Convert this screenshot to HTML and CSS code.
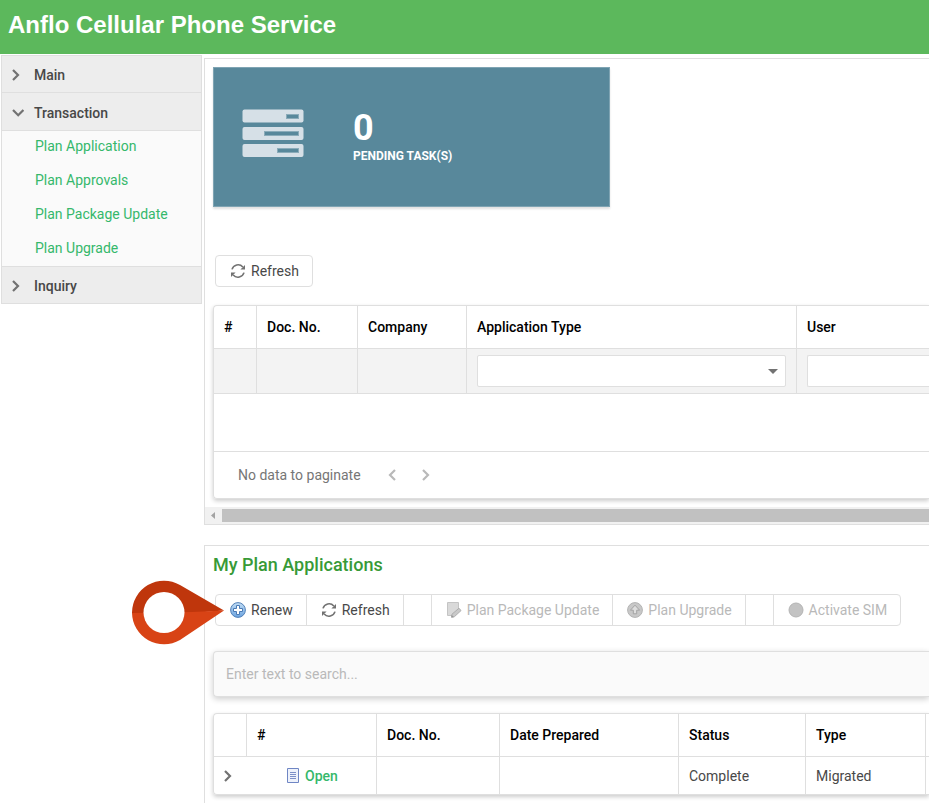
FILE: index.html
```html
<!DOCTYPE html>
<html lang="en">
  <head>
    <meta charset="UTF-8">
    <title>Anflo Cellular Phone Service</title>
    <link rel="stylesheet" href="styles.css">
  </head>
  <body>
    <!-- shared icons -->
    <svg class="sprite" aria-hidden="true">
      <symbol id="chevron" viewBox="0 0 16 16">
        <path d="M5 3l5 5-5 5" fill="none" stroke="currentColor" stroke-width="2.2"/>
      </symbol>
      <symbol id="chevron-down" viewBox="0 0 16 16">
        <path d="M5 5l5.200 5.200L15.400 5" fill="none" stroke="currentColor" stroke-width="2.2"/>
      </symbol>
      <symbol id="refresh" viewBox="0 0 16 16">
        <path d="M2 6.400A6.300 6.300 0 0 1 12.800 4M14 9.600A6.300 6.300 0 0 1 3.200 12" fill="none" stroke="currentColor" stroke-width="1.6"/>
        <path d="M15 2v4.600h-4.600zM1 14V9.400h4.600z" fill="currentColor"/>
      </symbol>
    </svg>

    <header class="header">
      <h1>Anflo Cellular Phone Service</h1>
    </header>

    <div class="layout">
      <nav class="sidebar">
        <button type="button" class="group"><svg class="icon"><use href="#chevron"/></svg>Main</button>
        <button type="button" class="group open"><svg class="icon"><use href="#chevron-down"/></svg>Transaction</button>
        <ul class="links">
          <li><a href="#">Plan Application</a></li>
          <li><a href="#">Plan Approvals</a></li>
          <li><a href="#">Plan Package Update</a></li>
          <li><a href="#">Plan Upgrade</a></li>
        </ul>
        <button type="button" class="group"><svg class="icon"><use href="#chevron"/></svg>Inquiry</button>
      </nav>

      <main class="content">
        <section class="panel tasks">
          <div class="card">
            <svg class="card-icon" viewBox="0 0 62 48">
              <g fill="#d6e0e7">
                <rect x=".5" y=".5" width="61" height="13" rx="2"/>
                <rect x=".5" y="18" width="61" height="13" rx="2"/>
                <rect x=".5" y="35" width="61" height="13" rx="2"/>
              </g>
              <g fill="#58889b" stroke="#8aabb9">
                <rect x="44.500" y="5.500" width="12" height="4"/>
                <rect x="22.500" y="22.500" width="34" height="4"/>
                <rect x="35.500" y="39.500" width="21" height="4"/>
              </g>
            </svg>
            <div class="card-text">
              <div class="count">0</div>
              <div class="count-label">PENDING TASK(S)</div>
            </div>
          </div>

          <div class="toolbar">
            <button type="button"><svg class="icon"><use href="#refresh"/></svg>Refresh</button>
          </div>

          <div class="grid">
            <table>
              <colgroup>
                <col class="w43"><col class="w101"><col class="w109"><col class="w330"><col>
              </colgroup>
              <thead>
                <tr><th>#</th><th>Doc. No.</th><th>Company</th><th>Application Type</th><th>User</th></tr>
                <tr class="filter">
                  <td></td>
                  <td></td>
                  <td></td>
                  <td><div class="select"><select aria-label="Application Type"><option></option></select></div></td>
                  <td><input type="text" aria-label="User"></td>
                </tr>
              </thead>
              <tbody>
                <tr class="empty"><td colspan="5"></td></tr>
              </tbody>
            </table>
            <div class="pager">
              <span>No data to paginate</span>
              <button type="button" class="prev" aria-label="Previous" disabled><svg class="icon"><use href="#chevron"/></svg></button>
              <button type="button" aria-label="Next" disabled><svg class="icon"><use href="#chevron"/></svg></button>
            </div>
          </div>

          <div class="scrollbar">
            <svg viewBox="0 0 17 17"><path d="M10 5v7L6 8.500z" fill="#a3a3a3"/></svg>
            <div class="thumb"></div>
          </div>
        </section>

        <section class="panel plans">
          <h2>My Plan Applications</h2>

          <div class="toolbar">
            <button type="button">
              <svg class="icon" viewBox="0 0 16 16">
                <defs>
                  <linearGradient id="blue" x1="0" y1="0" x2="0" y2="1">
                    <stop offset="0" stop-color="#c3def5"/>
                    <stop offset="1" stop-color="#6ba3df"/>
                  </linearGradient>
                </defs>
                <circle cx="8" cy="8" r="7.400" fill="url(#blue)" stroke="#5482b8"/>
                <path d="M6.500 3.500h3v3h3v3h-3v3h-3v-3h-3v-3h3z" fill="#fff" stroke="#4a7ab5"/>
              </svg>Renew</button>
            <button type="button"><svg class="icon"><use href="#refresh"/></svg>Refresh</button>
            <span class="gap"></span>
            <button type="button" disabled>
              <svg class="icon" viewBox="0 0 16 16">
                <path d="M1.500.500h11v8l-5 5h-6z" fill="#d9d9d9" stroke="#c4c4c4"/>
                <path d="M6 12.200l7-6 2 2.400-6.500 6-3 .600z" fill="#c9c9c9" stroke="#adadad"/>
                <path d="M5.400 15.600l.3-2.600 2.300 2.200z" fill="#999"/>
              </svg>Plan Package Update</button>
            <button type="button" disabled>
              <svg class="icon" viewBox="0 0 16 16">
                <circle cx="8" cy="8" r="7.400" fill="#c8c8c8" stroke="#b3b3b3"/>
                <path d="M8 3.200l4.600 5H9.700v3.600H6.300V8.200H3.400z" fill="#dedede" stroke="#a3a3a3"/>
              </svg>Plan Upgrade</button>
            <span class="gap"></span>
            <button type="button" disabled>
              <svg class="icon" viewBox="0 0 16 16">
                <circle cx="8" cy="8" r="7" fill="#c3c3c3" stroke="#b4b4b4"/>
              </svg>Activate SIM</button>

            <!-- callout pointing at Renew -->
            <svg class="callout" viewBox="0 0 92 65">
              <path d="M0 33A32 32 0 0 1 48 5L92 30.500L60 33z" fill="#bf360c"/>
              <path d="M0 33A32 32 0 0 0 48 60L92 30.500L60 32z" fill="#d84315"/>
              <circle cx="32" cy="32.500" r="20.500" fill="#fff"/>
            </svg>
          </div>

          <input type="search" class="search" placeholder="Enter text to search..." aria-label="Search">

          <div class="grid">
            <table>
              <colgroup>
                <col class="w33"><col class="w130"><col class="w123"><col class="w179"><col class="w127"><col class="w120"><col>
              </colgroup>
              <thead>
                <tr><th></th><th>#</th><th>Doc. No.</th><th>Date Prepared</th><th>Status</th><th>Type</th><th></th></tr>
              </thead>
              <tbody>
                <tr class="row">
                  <td class="expand"><button type="button" aria-label="Expand"><svg class="icon"><use href="#chevron"/></svg></button></td>
                  <td class="action">
                    <a href="#">
                      <svg class="icon" viewBox="0 0 16 16">
                        <path d="M2.500.500h11v14h-11z" fill="#eef2fb" stroke="#6f86c4"/>
                        <path d="M5 4.500h6M5 6.500h6M5 8.500h6M5 10.500h6" stroke="#7d90c8"/>
                      </svg>Open</a>
                  </td>
                  <td></td>
                  <td></td>
                  <td>Complete</td>
                  <td>Migrated</td>
                  <td></td>
                </tr>
              </tbody>
            </table>
          </div>
        </section>
      </main>
    </div>
  </body>
</html>
```
FILE: styles.css
```css
* {
  box-sizing: border-box;
}
body {
  display: flex;
  flex-direction: column;
  min-height: 100vh;
  margin: 0;
  overflow-x: hidden;
  background-color: #fff;
  color: #484848;
  font-family: Roboto, 'Liberation Sans', sans-serif;
  font-size: 14px;
  line-height: 20px;
}
button,
input,
select {
  font: inherit;
  color: inherit;
}
button {
  margin: 0;
  padding: 0;
  border: none;
  background: none;
  cursor: pointer;
}
.sprite {
  position: absolute;
  width: 0;
  height: 0;
}
.icon {
  flex: none;
  width: 16px;
  height: 16px;
  color: #727272;
}
.header {
  height: 54px;
  padding: 11px 8px;
  background-color: #5cb85c;
}
.header h1 {
  margin: 0;
  color: #fff;
  font-family: 'Liberation Sans', Arial, sans-serif;
  font-size: 24px;
  line-height: 28px;
}
.layout {
  display: flex;
  flex: 1;
  align-items: stretch;
}

/* sidebar */
.sidebar {
  flex: none;
  align-self: flex-start;
  width: 201px;
  margin: 1px 2px 0 1px;
  border: 1px solid #dfdfdf;
}
.group {
  display: flex;
  align-items: center;
  gap: 10px;
  width: 100%;
  height: 36px;
  padding: 2px 6px 0;
  background-color: #ededed;
  font-weight: 500;
}
.group.open {
  height: 38px;
  border-top: 1px solid #dfdfdf;
}
.links {
  margin: 0;
  padding: 0;
  border: solid #dfdfdf;
  border-width: 1px 0;
  background-color: #fafafa;
  list-style: none;
}
.links li + li {
  margin-top: 1px;
}
.links a {
  display: block;
  padding: 5px 33px 8px;
  color: #35b86b;
  text-decoration: none;
}

/* panels and grids run up to the right edge of the window */
.content {
  display: flex;
  flex-direction: column;
  flex: 1;
  gap: 20px;
  min-width: 0;
  padding-top: 4px;
}
.panel {
  padding: 8px 0 0 8px;
  border: 1px solid #dfdfdf;
  border-right: none;
}
.plans {
  flex: 1;
  padding-bottom: 8px;
  border-bottom: none;
}
.card {
  display: flex;
  align-items: center;
  gap: 49px;
  width: 397px;
  height: 140px;
  margin-bottom: 48px;
  padding: 0 28px;
  border: 1px solid #7fa4b3;
  background-color: #58889b;
  box-shadow: 0 2px 2px rgba(0, 0, 0, 0.12);
  color: #fff;
  font-weight: bold;
}
.card-icon {
  width: 62px;
  height: 48px;
  margin-bottom: 8px;
}
.card-text {
  padding-top: 2px;
}
.count {
  font-size: 36px;
  line-height: 36px;
}
.count-label {
  font-size: 12px;
}
.toolbar {
  position: relative;
  display: flex;
  width: max-content;
  height: 32px;
  margin-left: 2px;
  border: 1px solid #dfdfdf;
  border-radius: 4px;
}
.toolbar button {
  display: flex;
  align-items: center;
  gap: 5px;
  padding: 0 13px 0 14px;
}
.toolbar > * + button,
.toolbar .gap {
  border-left: 1px solid #dfdfdf;
}
.toolbar .gap {
  width: 28px;
}
.toolbar button:disabled {
  color: #b9b9b9;
  cursor: default;
}
.callout {
  position: absolute;
  top: -15px;
  left: -84px;
  width: 92px;
  height: 65px;
  pointer-events: none;
}
.panel h2 {
  margin: 0 0 18px;
  color: #379a37;
  font-size: 18px;
  font-weight: 500;
  line-height: 22px;
}

/* grids */
.grid {
  margin-top: 18px;
  border: 1px solid #dfdfdf;
  border-right: none;
  border-radius: 4px 0 0 4px;
  box-shadow: 0 2px 4px rgba(0, 0, 0, 0.2);
}
table {
  width: 100%;
  table-layout: fixed;
  border-collapse: separate;
  border-spacing: 0;
}
th,
td {
  padding: 0 10px;
  border: solid #dfdfdf;
  border-width: 0 1px 1px 0;
  text-align: left;
}
th {
  height: 43px;
  color: #000;
  font-weight: 500;
}
th:last-child,
td:last-child {
  padding-right: 0;
  border-right: none;
}
th:last-child:empty,
td:last-child:empty {
  padding: 0;
}
.filter td {
  height: 45px;
  background-color: #f3f3f3;
}
.select {
  position: relative;
}
.select::after {
  content: '';
  position: absolute;
  top: 14px;
  right: 8px;
  border: solid transparent;
  border-width: 5px 5px 0;
  border-top-color: #727272;
  pointer-events: none;
}
.filter select,
.filter input {
  display: block;
  width: 100%;
  height: 32px;
  padding: 0 8px;
  border: 1px solid #dfdfdf;
  border-radius: 2px;
  background-color: #fff;
  appearance: none;
}
.filter input {
  border-right: none;
  border-radius: 2px 0 0 2px;
}
.empty td {
  height: 58px;
}
.pager {
  display: flex;
  align-items: center;
  gap: 18px;
  height: 46px;
  padding: 0 24px;
  color: #767676;
}
.pager button {
  display: flex;
}
.pager .icon {
  color: #b9b9b9;
}
.pager .prev {
  margin-left: 5px;
  transform: rotate(180deg);
}
.scrollbar {
  display: flex;
  align-items: center;
  height: 17px;
  margin: 8px 0 0 -8px;
  background-color: #f1f1f1;
}
.scrollbar svg {
  width: 17px;
  height: 17px;
}
.scrollbar .thumb {
  flex: 1;
  height: 13px;
  background-color: #c1c1c1;
}
.search {
  display: block;
  width: 100%;
  height: 46px;
  margin-top: 25px;
  padding: 0 12px;
  border: 1px solid #dfdfdf;
  border-right: none;
  border-radius: 4px 0 0 4px;
  background-color: #fafafa;
  box-shadow: 0 2px 6px rgba(0, 0, 0, 0.2);
  appearance: none;
}
.search::placeholder {
  color: #b9b9b9;
}
.plans .grid {
  margin-top: 16px;
}
.row td {
  height: 37px;
  border-bottom: none;
}
.row .expand {
  padding: 0 6px;
  border-right: none;
}
.expand button {
  display: flex;
}
.row .action a {
  display: flex;
  align-items: center;
  justify-content: center;
  gap: 4px;
  color: #35b86b;
  font-weight: 500;
  text-decoration: none;
}

/* column widths */
.w33 { width: 33px; }
.w43 { width: 43px; }
.w101 { width: 101px; }
.w109 { width: 109px; }
.w120 { width: 120px; }
.w123 { width: 123px; }
.w127 { width: 127px; }
.w130 { width: 130px; }
.w179 { width: 179px; }
.w330 { width: 330px; }
```
